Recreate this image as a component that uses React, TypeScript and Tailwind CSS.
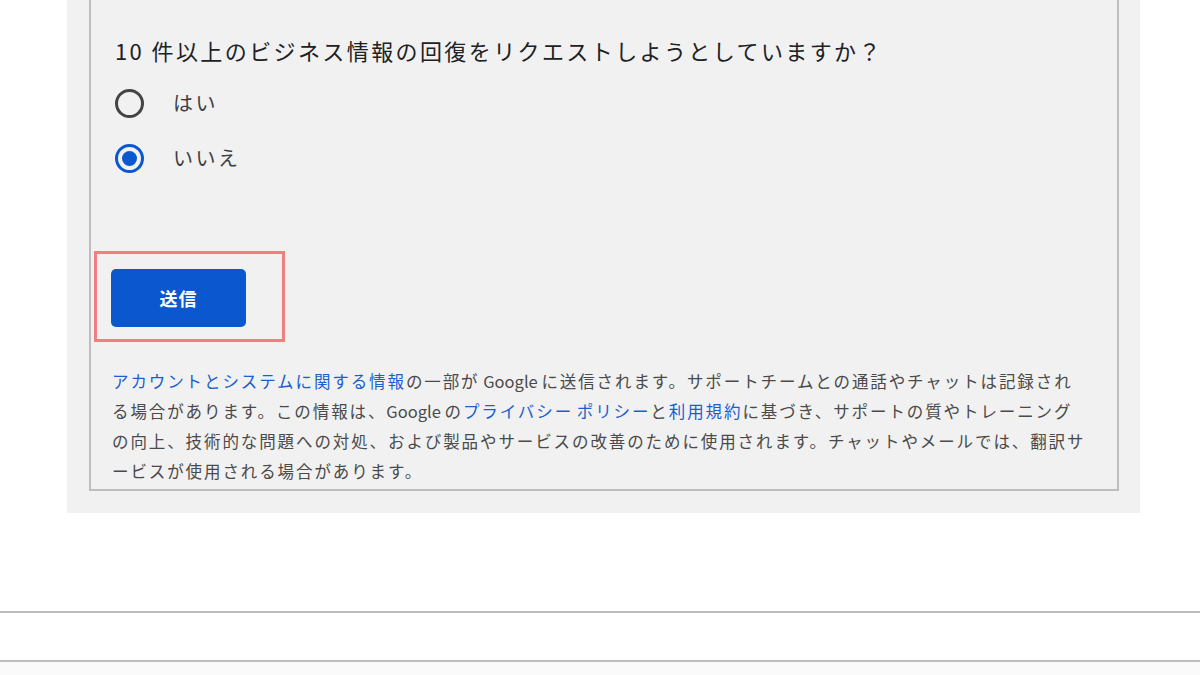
import React, { useState } from "react";

const jp = { fontFamily: '"Noto Sans CJK JP", "Noto Sans", sans-serif' };

function Radio({ checked, label, onClick }: { checked: boolean; label: string; onClick: () => void }) {
  return (
    <div onClick={onClick} className="flex items-center h-[40px] cursor-pointer">
      <div
        className={`w-[29px] h-[29px] rounded-full border-[3px] flex items-center justify-center ${
          checked ? "border-[#0b57d0]" : "border-[#444444]"
        }`}
      >
        {checked && <div className="w-[15px] h-[15px] rounded-full bg-[#0b57d0]" />}
      </div>
      <span className="ml-[29px] text-[20px] tracking-[2.5px] text-[#3c4043]">{label}</span>
    </div>
  );
}

export default function App() {
  const [answer, setAnswer] = useState("no");

  return (
    <div className="w-[1200px] h-[675px] bg-white overflow-hidden" style={jp}>
      {/* Form panel */}
      <div className="ml-[67px] w-[1073px] bg-[#f1f1f1] pl-[22px] pr-[21px] pb-[22px]">
        <div className="border-x-2 border-b-2 border-[#bdbdbd] pl-[24px] pr-[20px] pb-[3px] flex flex-col">
          <p className="pt-[34px] text-[22px] leading-[32px] tracking-[2.4px] text-[#202124] whitespace-nowrap">
            10 件以上のビジネス情報の回復をリクエストしようとしていますか？
          </p>

          <div className="mt-[17px] flex flex-col gap-[15px]">
            <Radio checked={answer === "yes"} label="はい" onClick={() => setAnswer("yes")} />
            <Radio checked={answer === "no"} label="いいえ" onClick={() => setAnswer("no")} />
          </div>

          <div className="mt-[91px] ml-[-4px] relative w-[135px]">
            <button className="w-[135px] h-[58px] rounded-[5px] bg-[#0b57d0] text-white text-[18px] font-bold tracking-[1px]">
              送信
            </button>
            {/* highlight */}
            <div className="absolute left-[-17px] top-[-18px] w-[191px] h-[91px] border-[3px] border-[#f08080] pointer-events-none" />
          </div>

          <p className="mt-[39px] ml-[-3px] text-[16.5px] leading-[30px] tracking-[1.9px] text-[#4a4a4a] whitespace-nowrap">
            <a className="text-[#1a5fd0]">アカウントとシステムに関する情報</a>の一部が
            <span className="tracking-normal"> Google </span>に送信されます。サポートチームとの通話やチャットは記録され
            <br />
            る場合があります。この情報は、<span className="tracking-normal">Google </span>の
            <a className="text-[#1a5fd0]">
              プライバシー<span className="tracking-normal"> </span>ポリシー
            </a>
            と<a className="text-[#1a5fd0]">利用規約</a>に基づき、サポートの質やトレーニング
            <br />
            の向上、技術的な問題への対処、および製品やサービスの改善のために使用されます。チャットやメールでは、翻訳サ
            <br />
            ービスが使用される場合があります。
          </p>
        </div>
      </div>

      {/* Footer rules */}
      <div className="mt-[98px] border-t-2 border-[#bdbdbd] h-[49px] bg-white" />
      <div className="border-t-2 border-[#bdbdbd] h-[20px] bg-[#fafafa]" />
    </div>
  );
}
